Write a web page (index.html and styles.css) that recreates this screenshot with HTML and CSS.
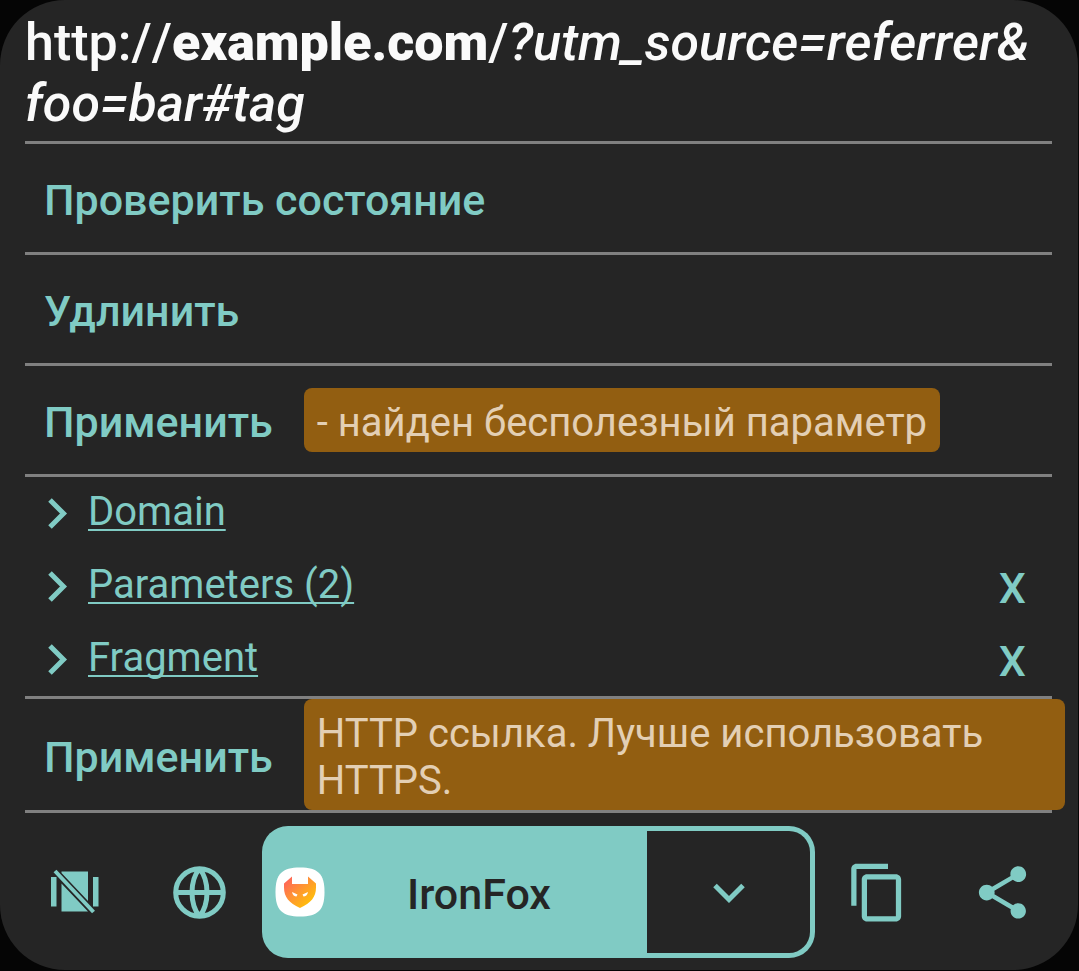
FILE: index.html
```html
<!DOCTYPE html>
<html lang="ru">
<head>
<meta charset="utf-8">
<meta name="viewport" content="width=device-width, initial-scale=1">
<title>URL</title>
<link rel="stylesheet" href="styles.css">
</head>
<body>
<main class="dialog">
  <p class="url">http://<b>example.com</b>/<i>?utm_source=referrer&amp;<wbr>foo=bar#tag</i></p>

  <section class="module action"><button class="text-button" type="button">Проверить состояние</button></section>
  <section class="module action"><button class="text-button" type="button">Удлинить</button></section>
  <section class="module action">
    <button class="text-button" type="button">Применить</button>
    <p class="notice">- найден бесполезный параметр</p>
  </section>

  <ul class="module parts">
    <li class="part">
      <svg class="chevron" viewBox="0 0 20 32" aria-hidden="true"><path d="M2 2 15.500 15.500 2 29"/></svg>
      <a class="part-link" href="#domain">Domain</a>
    </li>
    <li class="part">
      <svg class="chevron" viewBox="0 0 20 32" aria-hidden="true"><path d="M2 2 15.500 15.500 2 29"/></svg>
      <a class="part-link" href="#parameters">Parameters (2)</a>
      <button class="text-button remove" type="button">X</button>
    </li>
    <li class="part">
      <svg class="chevron" viewBox="0 0 20 32" aria-hidden="true"><path d="M2 2 15.500 15.500 2 29"/></svg>
      <a class="part-link" href="#fragment">Fragment</a>
      <button class="text-button remove" type="button">X</button>
    </li>
  </ul>

  <section class="module action last">
    <button class="text-button" type="button">Применить</button>
    <p class="notice">HTTP ссылка. Лучше использовать HTTPS.</p>
  </section>

  <footer class="toolbar">
    <button class="icon-button" type="button" aria-label="Custom tabs">
      <svg class="icon" viewBox="0 0 63 63" aria-hidden="true">
        <path d="M8 16h5.500v29.500H8zM50 16h5.500v29.500H50zM18.500 10.500H45V40L18.500 12zM18.500 22.500 45 50.500H18.500z"/>
        <path class="slash" d="M12 10 50.500 51"/>
      </svg>
    </button>
    <button class="icon-button" type="button" aria-label="Web">
      <svg class="icon line" viewBox="0 0 63 63" aria-hidden="true">
        <circle cx="31.500" cy="31.500" r="23.800"/>
        <path d="M7 31.500h49M31.500 7.500C21.500 20 21.500 43 31.500 55.500M31.500 7.500C41.500 20 41.500 43 31.500 55.500"/>
      </svg>
    </button>
    <div class="opener">
      <button class="open" type="button">
        <svg class="app-icon" viewBox="0 0 50 50" aria-hidden="true">
          <defs><linearGradient id="fox" x1="0" y1="0" x2="1" y2="1"><stop offset="0.100" stop-color="#ff6658"/><stop offset="0.450" stop-color="#ff9433"/><stop offset="0.850" stop-color="#ffc107"/></linearGradient></defs>
          <path fill="#fff" d="M25 .5C43 .5 49.500 7 49.500 25S43 49.500 25 49.500.5 43 .5 25 7 .5 25 .5z"/>
          <path fill="url(#fox)" d="M17 9.500V17h16V9.500l8 7v4C41 30 36 36 25 41 14 36 9 30 9 20.500v-4z"/>
          <path fill="#fff" d="m17 25 5.500 2.500-1 2c-2 0-4-1.500-4.500-4.500zM33 25l-5.500 2.500 1 2c2 0 4-1.500 4.500-4.500z"/>
        </svg>
        <span class="app-name">IronFox</span>
      </button>
      <button class="choose" type="button" aria-label="Choose app">
        <svg class="chevron-down" viewBox="0 0 32 20" aria-hidden="true"><path d="M2 2.500 16 16.500 30 2.500"/></svg>
      </button>
    </div>
    <button class="icon-button" type="button" aria-label="Copy">
      <svg class="icon" viewBox="0 0 24 24" aria-hidden="true"><path d="M16 1H4c-1.100 0-2 .9-2 2v14h2V3h12V1zm3 4H8c-1.100 0-2 .9-2 2v14c0 1.100.9 2 2 2h11c1.100 0 2-.9 2-2V7c0-1.100-.9-2-2-2zm0 16H8V7h11v14z"/></svg>
    </button>
    <button class="icon-button" type="button" aria-label="Share">
      <svg class="icon" viewBox="0 0 24 24" aria-hidden="true"><path d="M18 16.080c-.76 0-1.440.3-1.960.77L8.910 12.700c.05-.23.09-.46.09-.7s-.04-.47-.09-.7l7.050-4.110c.54.5 1.250.81 2.040.81 1.660 0 3-1.340 3-3s-1.340-3-3-3-3 1.340-3 3c0 .24.04.47.09.7L8.040 9.810C7.500 9.310 6.790 9 6 9c-1.660 0-3 1.340-3 3s1.340 3 3 3c.79 0 1.500-.31 2.040-.81l7.120 4.160c-.05.21-.08.43-.08.65 0 1.610 1.310 2.920 2.920 2.920s2.920-1.310 2.920-2.920-1.310-2.920-2.920-2.920z"/></svg>
    </button>
  </footer>
</main>
</body>
</html>
```

FILE: styles.css
```css
* { box-sizing: border-box; }

:root {
  --surface: #252525;
  --accent: #80cbc4;
  --divider: #808080;
}

body {
  margin: 0;
  padding: 0 1px 1px 0;
  background: #050505;
  color: #fafafa;
  font-family: Roboto, "Noto Sans", sans-serif;
}

.dialog {
  padding: 12px 13px 12px 12px;
  border-radius: 65px;
  background: var(--surface);
}

.url {
  margin: 0;
  padding: 0 13px 7px;
  font-size: 52px;
  line-height: 61px;
  font-weight: 500;
  font-kerning: none;
}
.url b { font-weight: 900; }

button {
  padding: 0;
  border: 0;
  background: none;
  color: var(--accent);
  font: inherit;
  cursor: pointer;
}

.module {
  margin: 0;
  padding: 3px 0 0;
  background: linear-gradient(var(--divider), var(--divider)) 13px 0 / calc(100% - 26px) 3px no-repeat;
}

.action {
  display: flex;
  align-items: center;
  min-height: 111px;
}

.text-button {
  flex: none;
  padding: 4px 31px 0 32px;
  font-size: 43px;
  line-height: 64px;
  font-weight: 500;
}

.notice {
  margin: 0;
  padding: 11px 13px 6px;
  border-radius: 8px;
  background: #925e11;
  color: #e3cfb4;
  font-size: 40px;
  line-height: 47px;
}

.parts { list-style: none; }

.part {
  display: flex;
  align-items: center;
  height: 73px;
  padding: 0 39px 0 36px;
}

.part-link {
  margin-left: 20px;
  padding-bottom: 4px;
  color: var(--accent);
  font-size: 40px;
  line-height: 47px;
  text-decoration-thickness: 2px;
  text-underline-offset: 4px;
  text-decoration-skip-ink: none;
}

.remove { margin-left: auto; padding: 2px 0 0; }

.chevron { width: 20px; height: 32px; }
.chevron-down { width: 32px; height: 20px; }
.chevron path, .chevron-down path {
  fill: none;
  stroke: var(--accent);
  stroke-width: 5px;
}

.last {
  position: relative;
  padding-bottom: 3px;
}
.last::after {
  content: "";
  position: absolute;
  inset: auto 13px 0 13px;
  height: 3px;
  background: var(--divider);
}

.toolbar {
  display: flex;
  padding-top: 13px;
}

.icon-button {
  display: flex;
  flex: none;
  align-items: center;
  justify-content: center;
  width: 125px;
}

.icon {
  width: 63px;
  height: 63px;
  fill: var(--accent);
}
.slash { stroke: var(--accent); stroke-width: 4px; }
.line { fill: none; stroke: var(--accent); stroke-width: 5px; }

.opener {
  display: flex;
  flex: 1;
  height: 132px;
  overflow: hidden;
  border-radius: 26px;
  background: var(--accent);
}

.open {
  display: flex;
  flex: 7;
  align-items: center;
  padding-left: 13px;
  color: var(--surface);
  font-size: 43px;
  font-weight: 500;
}
.app-icon { width: 50px; height: 50px; }
.app-name { flex: 1; padding: 4px 14px 0 0; }

.choose {
  display: flex;
  flex: none;
  width: 163px;
  align-items: center;
  justify-content: center;
  margin: 5px 5px 5px 0;
  padding-top: 2px;
  border-radius: 0 21px 21px 0;
  background: var(--surface);
}
```
